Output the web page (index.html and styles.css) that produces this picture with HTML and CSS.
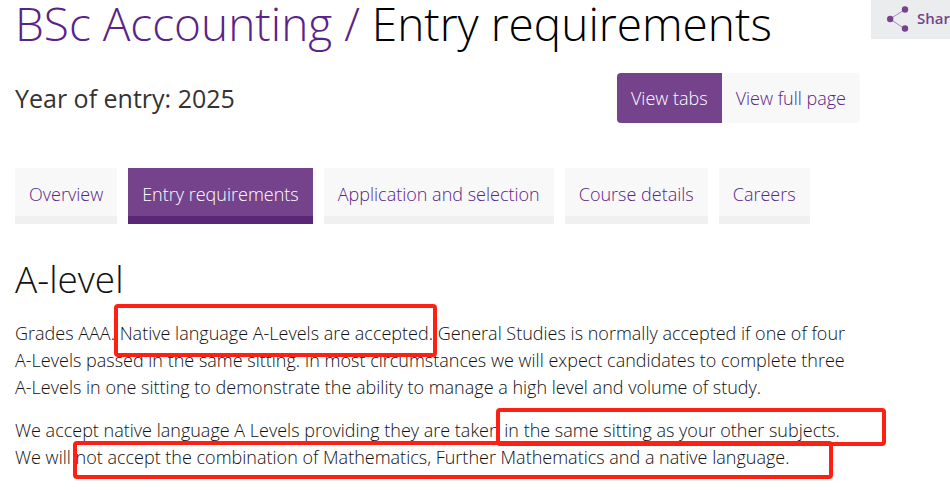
FILE: index.html
```
<!DOCTYPE html>
<html lang="en">
<head>
<meta charset="utf-8">
<title>BSc Accounting / Entry requirements</title>
<link rel="stylesheet" href="styles.css">
</head>
<body>
<button class="share" type="button">
<svg class="share-icon" viewBox="0 0 22 26" aria-hidden="true"><path d="M18 3.500 3 13l15 10" fill="none" stroke="#a98bbd" stroke-width="1"/><circle cx="18" cy="3.500" r="3.200"/><circle cx="3.200" cy="13" r="3.200"/><circle cx="18" cy="22.500" r="3.200"/></svg>
<span>Share</span>
</button>
<main class="page">
<h1><a href="#course">BSc Accounting /</a> Entry requirements</h1>
<div class="toolbar">
<p class="year">Year of entry: 2025</p>
<div class="views"><button class="view active" type="button">View tabs</button><button class="view" type="button">View full page</button></div>
</div>
<nav class="tabs">
<a href="#overview">Overview</a>
<a class="active" href="#entry">Entry requirements</a>
<a href="#application">Application and selection</a>
<a href="#details">Course details</a>
<a href="#careers">Careers</a>
</nav>
<section id="entry">
<h2>A-level</h2>
<p>Grades AAA. <span class="mark mark-a">Native language A-Levels are accepted</span>. General Studies is normally accepted if one of four A-Levels passed in the same sitting. In most circumstances we will expect candidates to complete three A-Levels in one sitting to demonstrate the ability to manage a high level and volume of study.</p>
<p>We accept native language A Levels providing they are taken <span class="mark mark-b">in the same sitting as your other subjects.</span><br>We will <span class="mark mark-c">not accept the combination of Mathematics, Further Mathematics and a native language.</span></p>
</section>
</main>
</body>
</html>
```
FILE: styles.css
```
* { box-sizing: border-box; }
body { margin: 0; background: #fff; color: #111; font: 300 18px/27px "Open Sans", sans-serif; }
a { color: #5a2388; text-decoration: none; }
button { border: 0; font: inherit; cursor: pointer; }
.page { max-width: 875px; padding: 0 15px; }
h1 { margin: 0; font-size: 46px; line-height: 46px; font-weight: 300; color: #000; white-space: nowrap; }
.toolbar { display: flex; justify-content: space-between; align-items: center; margin-top: 27px; }
.year { margin: 0; font-size: 25px; line-height: 50px; font-weight: 400; color: #333; }
.views { display: flex; border-radius: 4px; overflow: hidden; }
.view { height: 50px; padding: 0 14px; background: #f8f8f8; color: #5a2388; }
.view.active { background: #74438c; color: #fff; }
.tabs { display: flex; gap: 11px; margin-top: 45px; }
.tabs a { padding: 13px 14px 8px; border-bottom: 8px solid #f0f0f0; background: #f8f8f8; }
.tabs .active { background: #74438c; border-color: #5a2778; color: #fff; }
h2 { margin: 31px 0 17px; font-size: 37px; line-height: 48px; font-weight: 300; }
section p { margin: 0 0 16px; }
.mark { position: relative; }
.mark::after { content: ""; position: absolute; border: 4px solid #ff2013; border-radius: 4px; }
.mark-a::after { inset: -17px -8px -12px -6px; }
.mark-b::after { inset: -10px -46px -4px -8px; }
.mark-c::after { inset: -4px -44px -10px -3px; }
.share { position: absolute; top: 0; right: 0; height: 39px; width: 79px; display: flex; align-items: center; gap: 8px; padding: 0 0 2px 16px; background: #ebecee; color: #74438c; font-size: 15px; font-weight: 600; overflow: hidden; }
.share-icon { width: 22px; height: 26px; fill: currentColor; flex: none; }
```
